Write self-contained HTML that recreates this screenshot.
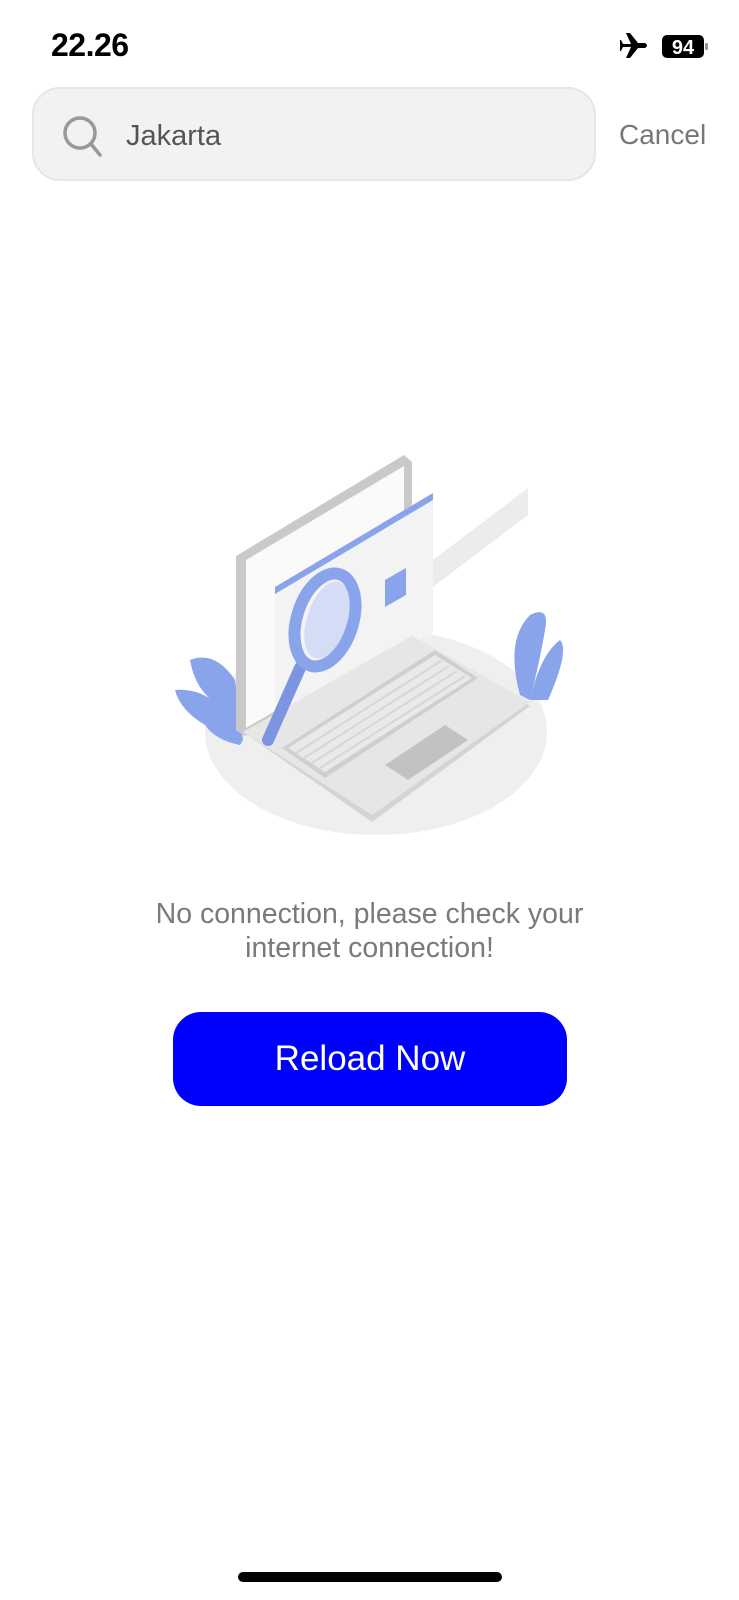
<!DOCTYPE html>
<html><head><meta charset="utf-8"><style>
*{margin:0;padding:0;box-sizing:border-box}
body{width:739px;height:1600px;background:#fff;position:relative;font-family:"Liberation Sans",sans-serif;overflow:hidden}
.time{position:absolute;left:51px;top:27px;font-size:32px;font-weight:bold;color:#000;letter-spacing:-0.5px}
.search{position:absolute;left:32px;top:87px;width:564px;height:94px;background:#f2f2f2;border:2px solid #e6e6e6;border-radius:28px}
.search span{position:absolute;left:92px;top:31px;font-size:29px;color:#555}
.cancel{position:absolute;left:619px;top:119px;font-size:28px;color:#777}
.msg{position:absolute;left:0;width:739px;top:897px;text-align:center;font-size:28.5px;line-height:34px;color:#7a7a7a}
.btn{position:absolute;left:173px;top:1012px;width:394px;height:94px;background:#0000ff;border-radius:28px;color:#fff;font-size:35px;text-align:center;line-height:94px}
.home{position:absolute;left:238px;top:1572px;width:264px;height:10px;border-radius:5px;background:#000}
</style></head><body>
<div class="time">22.26</div>
<svg style="position:absolute;left:620px;top:31px" width="90" height="30" viewBox="0 0 90 30">
<path d="M3 13 L11 13 L6 2 L10 2 L18 12 L25 12 Q29 14.5 25 17 L18 17 L10 27 L6 27 L11 16 L3 16 L1 20 L-1 20 L0 14.5 L-1 9 L1 9 Z" fill="#000"/>
<rect x="42" y="4" width="42" height="23" rx="5" fill="#000"/>
<text x="63" y="23" font-family="Liberation Sans" font-weight="bold" font-size="20" fill="#fff" text-anchor="middle">94</text>
<rect x="85" y="12" width="3" height="7" rx="1" fill="#999"/>
</svg>
<div class="search">
<svg style="position:absolute;left:28px;top:26px" width="44" height="44" viewBox="0 0 44 44"><circle cx="18" cy="18" r="15" fill="none" stroke="#999" stroke-width="3.5"/><line x1="29" y1="29" x2="38" y2="40" stroke="#999" stroke-width="3.5" stroke-linecap="round"/></svg>
<span>Jakarta</span></div>
<div class="cancel">Cancel</div>

<svg style="position:absolute;left:0;top:0" width="739" height="900" viewBox="0 0 739 900">
<ellipse cx="376" cy="732" rx="171" ry="103" fill="#efefef"/>
<path d="M520 695 Q505 640 530 615 Q550 605 545 630 Q540 660 530 700 Z" fill="#8aa4ec"/>
<path d="M530 700 Q540 655 560 640 Q570 650 548 700 Z" fill="#8aa4ec"/>
<path d="M240 745 Q215 740 205 725 Q180 710 175 690 Q200 688 218 705 Q195 690 190 660 Q215 650 235 680 L243 740 Z" fill="#8aa4ec"/>
<polygon points="400,585 528,488 528,515 400,612" fill="#ececec"/>
<polygon points="236,556 404,455 412,462 412,640 245,736 236,730" fill="#c9c9c9"/>
<polygon points="246,560 404,466 404,636 246,728" fill="#fafafa"/>
<polygon points="275,587 433,493 433,632 275,725" fill="#f3f3f3"/>
<polygon points="275,587 433,493 433,500 275,594" fill="#8aa4ec"/>
<polygon points="385,580 406,568 406,595 385,607" fill="#8aa4ec"/>
<polygon points="243,732 412,636 530,706 372,822" fill="#d4d4d4"/>
<polygon points="243,732 412,636 530,702 372,815" fill="#e6e6e6"/>
<polygon points="282,748 435,650 478,678 325,778" fill="#cfcfcf"/>
<polygon points="288,748 435,655 472,678 325,772" fill="#e9e9e9"/>
<g stroke="#d6d6d6" stroke-width="2">
<line x1="296" y1="753" x2="441" y2="661"/><line x1="304" y1="758" x2="449" y2="666"/><line x1="312" y1="763" x2="457" y2="671"/><line x1="320" y1="768" x2="465" y2="676"/>
</g>
<polygon points="385,765 445,725 468,740 408,780" fill="#c2c2c2"/>
<line x1="268" y1="740" x2="300" y2="668" stroke="#7b95e0" stroke-width="12" stroke-linecap="round"/>
<ellipse cx="325" cy="620" rx="28" ry="48" transform="rotate(18 325 620)" fill="none" stroke="#8aa4ec" stroke-width="12"/>
<ellipse cx="327" cy="620" rx="20" ry="40" transform="rotate(18 327 620)" fill="#c7d3f6" opacity=".7"/>
</svg>

<div class="msg">No connection, please check your<br>internet connection!</div>
<div class="btn">Reload Now</div>
<div class="home"></div>
</body></html>
